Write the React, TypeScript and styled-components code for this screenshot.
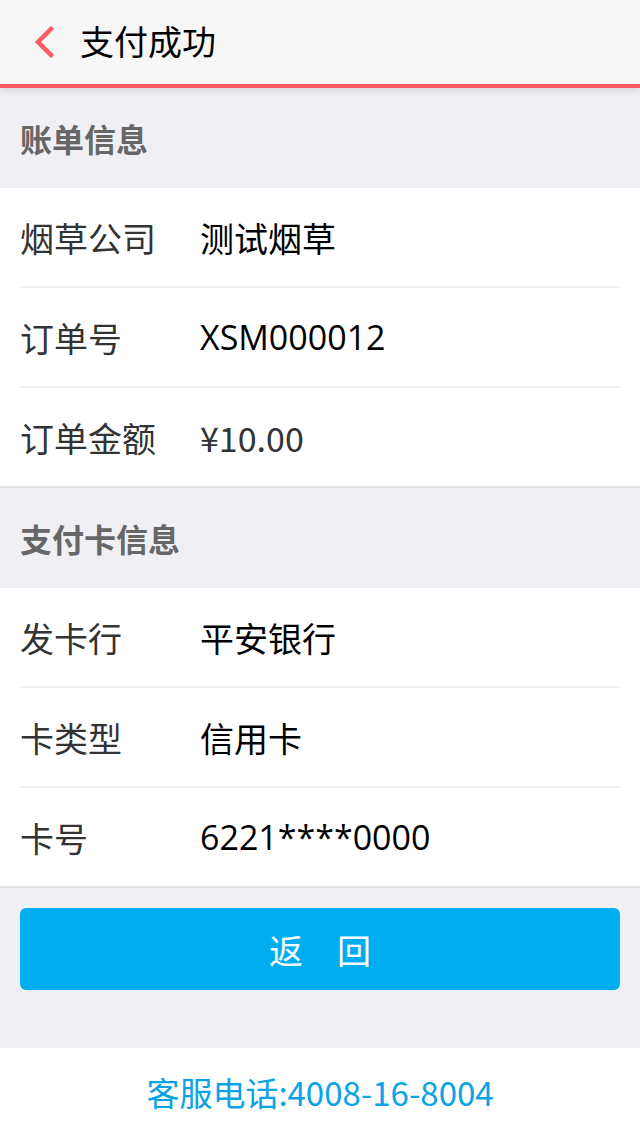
import React from "react";
import styled, { createGlobalStyle } from "styled-components";

const Global = createGlobalStyle`
  html, body { margin: 0; padding: 0; background: #efeff4; }
  body { font-family: "Open Sans", "Noto Sans CJK SC", sans-serif; }
  * { box-sizing: border-box; }
`;

const Page = styled.div`
  width: 640px;
  min-height: 1136px;
  background: #efeff4;
  display: flex;
  flex-direction: column;
`;

const Header = styled.header`
  height: 88px;
  background: #f7f7f7;
  border-bottom: 4px solid #ff5a5f;
  box-shadow: 0 2px 8px rgba(0, 0, 0, 0.12);
  display: flex;
  align-items: center;
  padding-left: 32px;
  position: relative;
  z-index: 1;
`;

const BackButton = styled.button`
  border: 0;
  background: none;
  padding: 0;
  width: 24px;
  height: 32px;
  display: flex;
  align-items: center;
  justify-content: center;
  cursor: pointer;
  margin-right: 24px;
`;

const Title = styled.h1`
  margin: 0;
  font-family: "Noto Sans CJK SC", sans-serif;
  font-weight: 400;
  font-size: 34px;
  color: #000;
  line-height: 1;
  padding-bottom: 2px;
`;

const SectionTitle = styled.div`
  height: 100px;
  display: flex;
  align-items: center;
  padding-left: 20px;
  font-family: "Noto Sans CJK SC", sans-serif;
  font-weight: 700;
  font-size: 32px;
  color: #666;
`;

const Group = styled.div`
  background: #fff;
  padding-left: 20px;
  border-bottom: 2px solid #e3e3e6;
`;

const Row = styled.div`
  height: 100px;
  margin-right: 20px;
  display: flex;
  align-items: center;
  border-bottom: 2px solid #efeff1;
  &:last-child {
    border-bottom: 0;
    height: 98px;
  }
`;

const Label = styled.span`
  width: 180px;
  font-family: "Noto Sans CJK SC", sans-serif;
  font-size: 34px;
  color: #333;
`;

const Value = styled.span<{ $price?: boolean }>`
  font-family: ${(p) =>
    p.$price ? `"Noto Sans CJK SC", sans-serif` : `"Open Sans", "Noto Sans CJK SC", sans-serif`};
  font-size: 34px;
  color: ${(p) => (p.$price ? "#333" : "#000")};
`;

const ButtonArea = styled.div`
  padding: 20px 20px 58px;
`;

const PrimaryButton = styled.button`
  width: 100%;
  height: 82px;
  border: 0;
  border-radius: 6px;
  background: #00aeef;
  color: #fff;
  font-family: "Noto Sans CJK SC", sans-serif;
  font-size: 34px;
  cursor: pointer;
`;

const Footer = styled.footer`
  background: #fff;
  height: 88px;
  display: flex;
  align-items: center;
  justify-content: center;
  font-family: "Noto Sans CJK SC", sans-serif;
  font-size: 33px;
  color: #09a3e6;
  flex: 1;
`;

type Item = { label: string; value: string; price?: boolean };

const bill: Item[] = [
  { label: "烟草公司", value: "测试烟草" },
  { label: "订单号", value: "XSM000012" },
  { label: "订单金额", value: "¥10.00", price: true },
];

const card: Item[] = [
  { label: "发卡行", value: "平安银行" },
  { label: "卡类型", value: "信用卡" },
  { label: "卡号", value: "6221****0000" },
];

const InfoGroup = ({ items }: { items: Item[] }) => (
  <Group>
    {items.map((it) => (
      <Row key={it.label}>
        <Label>{it.label}</Label>
        <Value $price={it.price}>{it.value}</Value>
      </Row>
    ))}
  </Group>
);

export default function App() {
  return (
    <>
      <Global />
      <Page>
        <Header>
          <BackButton aria-label="返回">
            <svg width="22" height="32" viewBox="0 0 22 32">
              <path
                d="M18 3 L5 16 L18 29"
                fill="none"
                stroke="#ff5a5f"
                strokeWidth="4.5"
                strokeLinecap="square"
              />
            </svg>
          </BackButton>
          <Title>支付成功</Title>
        </Header>
        <SectionTitle>账单信息</SectionTitle>
        <InfoGroup items={bill} />
        <SectionTitle>支付卡信息</SectionTitle>
        <InfoGroup items={card} />
        <ButtonArea>
          <PrimaryButton>返　回</PrimaryButton>
        </ButtonArea>
        <Footer>客服电话:4008-16-8004</Footer>
      </Page>
    </>
  );
}
